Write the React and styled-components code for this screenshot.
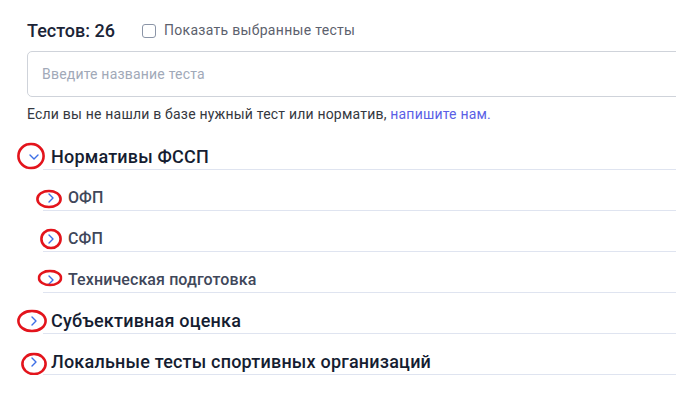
import styled, { createGlobalStyle } from 'styled-components'

const GlobalStyle = createGlobalStyle`
  html, body {
    margin: 0;
    padding: 0;
    background: #ffffff;
    overflow: hidden;
  }
  body {
    font-family: Roboto, "Liberation Sans", Arial, sans-serif;
  }
`;

const tree = [
    {
        title: 'Нормативы ФССП', open: true, mark: { w: 28, h: 27, dx: -3, dy: -1 },
        children: [
            { title: 'ОФП', mark: { w: 26, h: 19, dx: -2, dy: 1 } },
            { title: 'СФП', mark: { w: 22, h: 21, dx: 0, dy: 0 } },
            { title: 'Техническая подготовка', mark: { w: 25, h: 17, dx: -1, dy: -2 } },
        ],
    },
    { title: 'Субъективная оценка', mark: { w: 30, h: 23, dx: -2, dy: 0 }, children: [] },
    { title: 'Локальные тесты спортивных организаций', mark: { w: 26, h: 23, dx: 0, dy: 2 }, children: [] },
];

function Chevron({ open }) {
    return open ? (
        <svg width="10" height="6" viewBox="0 0 10 6" fill="none">
            <polyline points="1,1 5,5 9,1" stroke="#3d6fe6" strokeWidth="1.4" strokeLinecap="round" strokeLinejoin="round" />
        </svg>
    ) : (
        <svg width="6" height="10" viewBox="0 0 6 10" fill="none">
            <polyline points="1,1 5,5 1,9" stroke="#3d6fe6" strokeWidth="1.4" strokeLinecap="round" strokeLinejoin="round" />
        </svg>
    );
}

function Mark({ mark }) {
    return (
        <Ring $w={mark.w} $h={mark.h} $dx={mark.dx} $dy={mark.dy} viewBox={`0 0 ${mark.w} ${mark.h}`}>
            <ellipse cx={mark.w / 2} cy={mark.h / 2} rx={mark.w / 2 - 1.4} ry={mark.h / 2 - 1.4}
                fill="none" stroke="#e3141c" strokeWidth="2.6" />
        </Ring>
    );
}

function Node({ node, level }) {
    return (
        <>
            <Row $level={level}>
                <Toggle $level={level}>
                    <Chevron open={node.open} />
                    <Mark mark={node.mark} />
                </Toggle>
                <Label $level={level}>{node.title}</Label>
            </Row>
            {node.open && node.children.map((c) => <Node key={c.title} node={c} level={1} />)}
        </>
    );
}

function App() {
    return (
        <Page>
            <GlobalStyle />
            <Header>
                <Count>Тестов: 26</Count>
                <CheckLabel>
                    <Box />
                    Показать выбранные тесты
                </CheckLabel>
            </Header>
            <Search placeholder="Введите название теста" />
            <Hint>
                Если вы не нашли в базе нужный тест или норматив, <HintLink href="#">напишите нам.</HintLink>
            </Hint>
            <Tree>
                {tree.map((n) => <Node key={n.title} node={n} level={0} />)}
            </Tree>
        </Page>
    );
}

export default App;


const Page = styled.div`
  width: 760px;
  padding: 18px 0 0 27px;
`;

const Header = styled.div`
  display: flex;
  align-items: center;
  height: 24px;
`;

const Count = styled.div`
  font-size: 18px;
  font-weight: 500;
  color: #1b2437;
  width: 115px;
`;

const CheckLabel = styled.label`
  display: flex;
  align-items: center;
  gap: 8px;
  font-size: 14px;
  letter-spacing: 0.3px;
  color: #5c616d;
  cursor: pointer;
`;

const Box = styled.span`
  width: 12px;
  height: 12px;
  border: 1.5px solid #8b95a7;
  border-radius: 3px;
  margin-top: 1px;
`;

const Search = styled.input`
  display: block;
  box-sizing: border-box;
  width: 100%;
  height: 46px;
  margin-top: 9px;
  padding: 0 14px;
  border: 1px solid #cfd3da;
  border-radius: 5px;
  font-family: inherit;
  font-size: 14px;
  letter-spacing: 0.2px;
  outline: none;
  &::placeholder {
    color: #a1a9b8;
  }
`;

const Hint = styled.p`
  margin: 8px 0 0;
  font-size: 14px;
  letter-spacing: 0.2px;
  line-height: 18px;
  color: #353840;
`;

const HintLink = styled.a`
  color: #5b5fe6;
  text-decoration: none;
`;

const Tree = styled.div`
  margin: 6px 0 0 16px;
`;

const Row = styled.div`
  display: flex;
  align-items: flex-end;
  box-sizing: border-box;
  height: 41px;
  padding-bottom: 2px;
  border-bottom: 1px solid #dfe4f0;
`;

const Toggle = styled.span`
  position: relative;
  display: flex;
  align-items: center;
  justify-content: center;
  flex: 0 0 16px;
  height: 20px;
  margin-left: ${({ $level }) => ($level === 0 ? '-17px' : '0')};
  margin-right: 9px;
`;

const Ring = styled.svg`
  position: absolute;
  left: 50%;
  top: 50%;
  width: ${({ $w }) => $w}px;
  height: ${({ $h }) => $h}px;
  transform: translate(calc(-50% + ${({ $dx }) => $dx}px), calc(-50% + ${({ $dy }) => $dy}px));
  pointer-events: none;
`;

const Label = styled.span`
  font-size: ${({ $level }) => ($level === 0 ? '18px' : '16px')};
  letter-spacing: ${({ $level }) => ($level === 0 ? '0.2px' : '0.1px')};
  font-weight: 500;
  line-height: 20px;
  color: ${({ $level }) => ($level === 0 ? '#151d31' : '#40475a')};
`;
